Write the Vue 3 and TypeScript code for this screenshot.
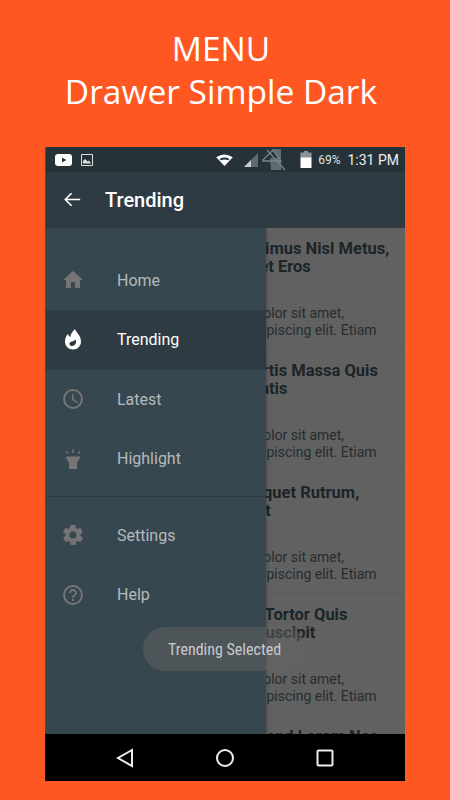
<script setup lang="ts">
interface MenuItem {
  label: string
  icon: string
  active?: boolean
}

const mainMenu: MenuItem[] = [
  { label: 'Home', icon: 'home' },
  { label: 'Trending', icon: 'flame', active: true },
  { label: 'Latest', icon: 'clock' },
  { label: 'Highlight', icon: 'light' }
]

const otherMenu: MenuItem[] = [
  { label: 'Settings', icon: 'gear' },
  { label: 'Help', icon: 'help' }
]

const articles = [
  ['Sodales Maximus Nisl Metus,', 'Sed Imperdiet Eros'],
  ['Mauris Lobortis Massa Quis', 'Proin Venenatis'],
  ['Senectus Aliquet Rutrum,', 'Duis Sit Amet'],
  ['Ullamcorper Tortor Quis', 'Malesuada Suscipit'],
  ['Sodales Eleifend Lorem Nec', 'Turpis']
]
</script>

<template>
  <div class="page">
    <header class="promo">
      <div>MENU</div>
      <div>Drawer Simple Dark</div>
    </header>

    <div class="phone">
      <div class="status">
        <svg class="st-yt" viewBox="0 0 17 12"><rect width="17" height="12" rx="3" fill="#fff" /><path d="M7 3.5 11.5 6 7 8.5z" fill="#263238" /></svg>
        <svg class="st-pic" viewBox="0 0 12 12"><path d="M.5.5h11v11H.5z" fill="none" stroke="#ddd" /><path d="M2 9.5V7l2-2 2.5 2.5L8 6.5l2 3z" fill="#ddd" /></svg>
        <span class="st-gap" />
        <svg class="st-wifi" viewBox="0 0 18 13"><path d="M0 3.5Q9-2.5 18 3.5L9 13z" fill="#fff" /><path d="M3.6 5.3Q9 2.3 14.4 5.3L13 6.8Q9 5.3 5 6.8z" fill="#263238" /></svg>
        <svg class="st-signal" viewBox="0 0 14 14"><path d="M14 0v14H0z" fill="#5f6b70" /><path d="M0 14h7V7z" fill="#c9cdcf" /></svg>
        <svg class="st-sim" viewBox="0 0 24 24"><path d="M10 1h9v14z" fill="#5f6b70" /><path d="M8 10h11v12H9z" fill="#5f6b70" /><path d="M1 12 11 2l8 11H1z" fill="none" stroke="#78868c" stroke-width="1.3" /><path d="M5 2l18 20" stroke="#78868c" stroke-width="1.3" /></svg>
        <svg class="st-batt" viewBox="0 0 12 17"><path d="M4 0h4v1.5h3.5V7H.5V1.5H4z" fill="#8b9599" /><path d="M.5 6.5h11V17H.5z" fill="#fff" /></svg>
        <span class="st-pct">69%</span>
        <span class="st-time">1:31 PM</span>
      </div>

      <div class="appbar">
        <svg class="back" viewBox="0 0 24 24"><path d="M20 12H5M11 5.500 4.500 12l6.500 6.500" fill="none" stroke="#fff" stroke-width="1.7" /></svg>
        <span class="appbar-title">Trending</span>
      </div>

      <div class="body">
        <div class="list">
          <article v-for="lines in articles" :key="lines[0]" class="article">
            <h3>{{ lines[0] }}<br />{{ lines[1] }}</h3>
            <p>Lorem ipsum dolor sit amet,<br />consectetur adipiscing elit. Etiam</p>
          </article>
        </div>
        <div class="scrim" />

        <nav class="drawer">
          <div class="menu-group">
            <div v-for="item in mainMenu" :key="item.label" class="menu-item" :class="{ active: item.active }">
              <svg class="menu-icon" viewBox="0 0 24 24">
                <path v-if="item.icon === 'home'" d="M10 20v-6h4v6h5v-8h3L12 3 2 12h3v8z" />
                <path v-else-if="item.icon === 'flame'" fill-rule="evenodd" d="M14 1C14.500 4 20 7 20 13.500 20 18 16.500 21.500 12 21.500S4 18 4 13.500C4 10.500 5 8 7 6 7.500 7.500 8.200 8.500 9.200 9 9.800 6 11.500 3 14 1zM14.800 11.500C15.800 14.500 14 18 11 18 9 18 8 16.500 8.600 15 9.300 13.300 12.500 13.800 14.800 11.500z" />
                <path v-else-if="item.icon === 'clock'" d="M12 2a10 10 0 1 0 0 20 10 10 0 0 0 0-20zm0 18a8 8 0 1 1 0-16 8 8 0 0 1 0 16zm.5-13H11v6l5.200 3.200.8-1.300-4.500-2.700z" />
                <path v-else-if="item.icon === 'light'" d="M5 9.500h14V11l-3 4.500V22H8v-6.500L5 11zM11.200 2.500h1.600V6h-1.600zM4.500 5.200l1-1.100 1.800 1.700-1 1.100zM19.500 5.200l-1-1.100-1.800 1.700 1 1.100z" />
              </svg>
              <span>{{ item.label }}</span>
            </div>
          </div>
          <div class="menu-group second">
            <div v-for="item in otherMenu" :key="item.label" class="menu-item">
              <svg class="menu-icon" viewBox="0 0 24 24">
                <path v-if="item.icon === 'gear'" d="M19.400 13c.1-.3.1-.7.1-1s0-.7-.1-1l2.100-1.600c.2-.2.2-.4.1-.6l-2-3.500c-.1-.2-.4-.3-.6-.2l-2.500 1c-.5-.4-1.100-.7-1.700-1l-.4-2.700c0-.2-.2-.4-.5-.4h-4c-.2 0-.5.2-.5.4l-.4 2.700c-.6.3-1.200.6-1.700 1l-2.500-1c-.2-.1-.5 0-.6.2l-2 3.500c-.1.2-.1.4.1.6L4.600 11c-.1.3-.1.7-.1 1s0 .7.1 1l-2.100 1.600c-.2.2-.2.4-.1.6l2 3.500c.1.2.4.3.6.2l2.500-1c.5.4 1.100.7 1.700 1l.4 2.700c0 .2.3.4.5.4h4c.3 0 .5-.2.5-.4l.4-2.700c.6-.3 1.200-.6 1.700-1l2.500 1c.2.1.5 0 .6-.2l2-3.500c.1-.2.1-.4-.1-.6zM12 15.500a3.500 3.500 0 1 1 0-7 3.500 3.500 0 0 1 0 7z" />
                <path v-else d="M12 2a10 10 0 1 0 0 20 10 10 0 0 0 0-20zm0 18a8 8 0 1 1 0-16 8 8 0 0 1 0 16zm-1-4h2v2h-2zm1-10c-2.200 0-4 1.800-4 4h2c0-1.100.9-2 2-2s2 .9 2 2c0 2-3 1.800-3 5h2c0-2.200 3-2.500 3-5 0-2.200-1.800-4-4-4z" />
              </svg>
              <span>{{ item.label }}</span>
            </div>
          </div>
        </nav>

        <div class="toast">Trending Selected</div>
      </div>

      <div class="navbar">
        <svg viewBox="0 0 20 20"><path d="M17 2 3 10l14 8z" /></svg>
        <svg viewBox="0 0 20 20"><circle cx="10" cy="10" r="8" /></svg>
        <svg viewBox="0 0 20 20"><rect x="2.500" y="2.500" width="15" height="15" rx="1" /></svg>
      </div>
    </div>
  </div>
</template>

<style>
html,
body {
  margin: 0;
  background: #ff5722;
}
</style>

<style scoped>
.page {
  width: 450px;
  height: 800px;
  background: #ff5722;
  overflow: hidden;
  display: flex;
  flex-direction: column;
  align-items: center;
  font-family: Roboto, sans-serif;
}

.promo {
  height: 147px;
  box-sizing: border-box;
  padding: 27px 8px 0 0;
  text-align: center;
  color: #fff;
  font-family: 'Open Sans', sans-serif;
  font-size: 33.5px;
  line-height: 43px;
}

.phone {
  position: relative;
  width: 360px;
  height: 634px;
  display: flex;
  flex-direction: column;
}

/* thin teal edge on the left of the device shot */
.phone::before {
  content: '';
  position: absolute;
  left: 0;
  top: 0;
  width: 1px;
  height: 587px;
  background: #1b5e66;
  z-index: 2;
}

.status {
  height: 25px;
  flex: none;
  background: #263238;
  display: flex;
  align-items: center;
  padding: 0 6px 0 10px;
  color: #fff;
}

.st-yt { width: 17px; height: 12px; margin-right: 9px; }
.st-pic { width: 12px; height: 12px; }
.st-gap { flex: 1; }
.st-wifi { width: 17px; height: 12px; margin-right: 11px; }
.st-signal { width: 14px; height: 14px; margin-right: 4px; }
.st-sim { width: 24px; height: 24px; margin-right: 14px; }
.st-batt { width: 12px; height: 17px; margin-right: 6px; }
.st-pct { font-size: 12px; color: #dfe2e3; margin-right: 7px; }
.st-time { font-size: 14px; color: #eceeef; }

.appbar {
  height: 56px;
  flex: none;
  background: #2f3b42;
  display: flex;
  align-items: center;
  padding-left: 17px;
  color: #fff;
}

.back { width: 23px; height: 23px; margin-left: -1px; margin-top: -2px; }

.appbar-title {
  margin-left: 21px;
  font-size: 20px;
  font-weight: 500;
}

.body {
  flex: 1;
  position: relative;
  overflow: hidden;
  background: #fff;
}

.list {
  margin-top: -1px;
  padding-left: 125px;
}

.article {
  height: 122px;
  box-sizing: border-box;
  padding-top: 12.5px;
  border-bottom: 1px solid #f2f2f2;
}

.article h3 {
  margin: 0;
  color: #4a5f6b;
  font-size: 16.5px;
  line-height: 18.5px;
  font-weight: 700;
  white-space: nowrap;
}

.article p {
  margin: 28.5px 0 0;
  color: #66767e;
  font-size: 14px;
  line-height: 17px;
  white-space: nowrap;
}

.scrim {
  position: absolute;
  inset: 0;
  background: rgba(0, 0, 0, 0.62);
}

.drawer {
  position: absolute;
  top: 0;
  left: 0;
  bottom: 0;
  width: 221px;
  background: #37474f;
  box-shadow: 1px 0 3px rgba(0, 0, 0, 0.2);
  padding-top: 22.5px;
  box-sizing: border-box;
}

.menu-item {
  height: 59.5px;
  display: flex;
  align-items: center;
  padding-left: 16px;
  color: #b4babd;
  font-size: 16px;
}

.menu-item.active {
  background: #2f3b42;
  color: #fff;
}

.menu-icon {
  width: 24px;
  height: 24px;
  fill: #757575;
  margin-right: 32px;
  flex: none;
}

.menu-item.active .menu-icon {
  fill: #fff;
}

.second {
  border-top: 1px solid #2f3b42;
  margin-top: 7.5px;
  padding-top: 8.5px;
}

.toast {
  position: absolute;
  left: 98px;
  top: 399px;
  width: 163px;
  height: 44px;
  border-radius: 22px;
  background: rgba(100, 100, 100, 0.5);
  color: #c8cacb;
  font-size: 16px;
  display: flex;
  align-items: center;
  justify-content: center;
  font-family: 'Roboto Condensed', Roboto, sans-serif;
}

.navbar {
  height: 47px;
  flex: none;
  background: #000;
  display: flex;
  align-items: center;
  justify-content: center;
  gap: 80px;
}

.navbar svg {
  width: 20px;
  height: 20px;
  fill: none;
  stroke: #eee;
  stroke-width: 2;
}
</style>
